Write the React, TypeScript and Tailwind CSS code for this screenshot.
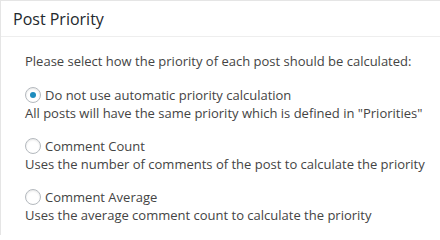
import React from "react";

function Radio({ checked }: { checked?: boolean }) {
  return (
    <span className="inline-flex items-center justify-center w-[16px] h-[16px] rounded-full border border-[#b4b9be] bg-white shadow-[inset_0_1px_2px_rgba(0,0,0,0.1)] mr-[4px] shrink-0">
      {checked && <span className="w-[6px] h-[6px] rounded-full bg-[#1e8cbe]" />}
    </span>
  );
}

function Option({ label, desc, checked }: { label: string; desc: string; checked?: boolean }) {
  return (
    <div className="flex flex-col">
      <div className="flex items-center h-[18px]">
        <Radio checked={checked} />
        <span>{label}</span>
      </div>
      <div className="h-[18px] leading-[18px]">{desc}</div>
    </div>
  );
}

export default function App() {
  return (
    <div className="w-[440px] h-[235px] bg-white overflow-hidden" style={{ fontFamily: '"Open Sans", sans-serif' }}>
      <div className="w-[460px] h-[260px] border-l border-t border-[#e5e5e5] bg-white">
        <div className="h-[36px] border-b border-[#eeeeee] flex items-center pl-[12px]">
          <span className="text-[16px] text-[#23282d]">Post Priority</span>
        </div>
        <div className="pl-[24px] pt-[15px] text-[13px] leading-[18px] text-[#444444] flex flex-col">
          <div className="h-[18px]">Please select how the priority of each post should be calculated:</div>
          <div className="flex flex-col gap-[15px] mt-[16px]">
            <Option checked label="Do not use automatic priority calculation" desc={'All posts will have the same priority which is defined in "Priorities"'} />
            <Option label="Comment Count" desc="Uses the number of comments of the post to calculate the priority" />
            <Option label="Comment Average" desc="Uses the average comment count to calculate the priority" />
          </div>
        </div>
      </div>
    </div>
  );
}
